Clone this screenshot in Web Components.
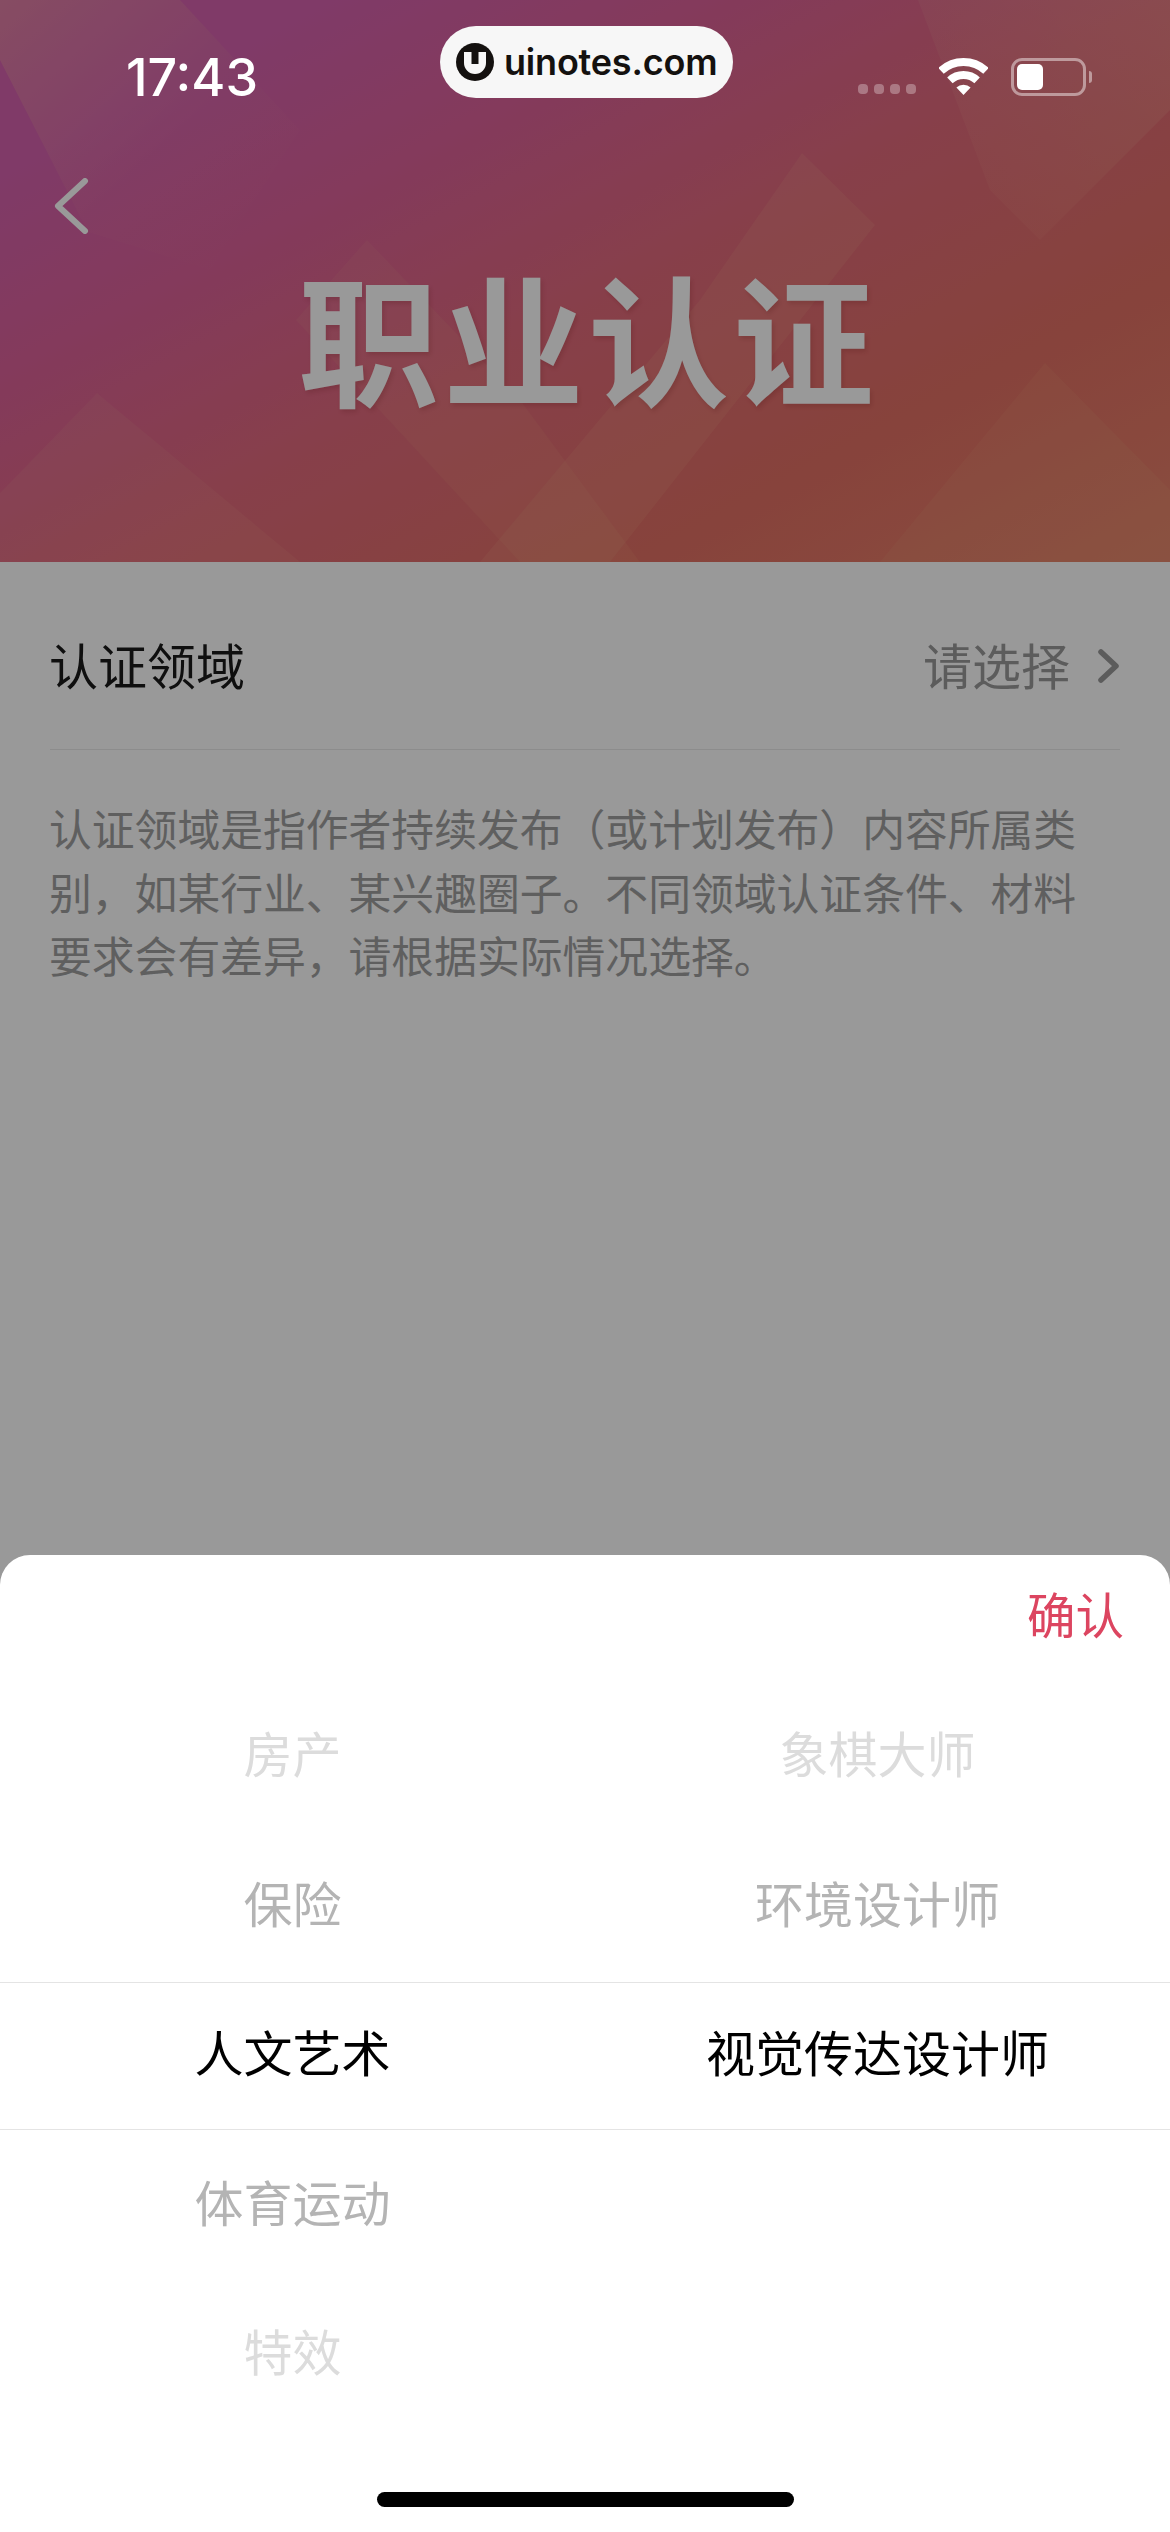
<!DOCTYPE html>
<html lang="zh-CN">
<head>
<meta charset="utf-8">
<title>职业认证</title>
<style>
    html, body { margin: 0; padding: 0; background: #fff; }
    body { font-family: "Noto Sans CJK SC", "Noto Sans", sans-serif; }
</style>
</head>
<body>
<cert-page>
    <cert-header title-text="职业认证"></cert-header>
    <field-row label="认证领域" placeholder="请选择"></field-row>
    <hint-text>认证领域是指作者持续发布（或计划发布）内容所属类别，如某行业、某兴趣圈子。不同领域认证条件、材料要求会有差异，请根据实际情况选择。</hint-text>
    <dim-overlay></dim-overlay>
    <picker-sheet>
        <picker-column items="房产,保险,人文艺术,体育运动,特效"></picker-column>
        <picker-column items="象棋大师,环境设计师,视觉传达设计师"></picker-column>
    </picker-sheet>
    <status-bar></status-bar>
</cert-page>
<script>
class CertPage extends HTMLElement {
    constructor() {
        super();
        this.attachShadow({ mode: 'open' });
        this.shadowRoot.innerHTML = `
            <style>
                :host {
                    display: block;
                    position: relative;
                    width: 1170px;
                    height: 2532px;
                    overflow: hidden;
                    background: #fff;
                }
            </style>
            <slot></slot>
        `;
    }
}

class StatusBar extends HTMLElement {
    constructor() {
        super();
        this.attachShadow({ mode: 'open' });
        this.shadowRoot.innerHTML = `
            <style>
                :host {
                    position: absolute;
                    top: 0;
                    left: 0;
                    right: 0;
                    z-index: 3;
                    display: grid;
                    grid-template-columns: 440px 293px 1fr;
                    color: #fff;
                }
                .time {
                    padding: 48px 0 0 126px;
                    font: 500 52px/60px Inter, "Liberation Sans", sans-serif;
                    letter-spacing: 0;
                }
                .badge {
                    margin-top: 26px;
                    height: 72px;
                    border-radius: 36px;
                    background: #f7f7f7;
                    display: flex;
                    align-items: center;
                    padding-left: 16px;
                    gap: 10px;
                    color: #14110f;
                    font: 600 36px/44px Inter, "Liberation Sans", sans-serif;
                    letter-spacing: -0.2px;
                }
                .badge svg { width: 38px; height: 38px; flex: none; }
                .icons {
                    margin: 58px 0 0 125px;
                    display: flex;
                    align-items: flex-end;
                    height: 38px;
                }
                .dots { display: flex; gap: 6px; margin-right: 23px; margin-bottom: 2px; }
                .dots i { width: 10px; height: 10px; border-radius: 4px; background: rgba(255, 255, 255, .3); }
                .wifi { width: 49px; height: 37px; margin-right: 23px; margin-bottom: 1px; }
                .battery {
                    box-sizing: border-box;
                    width: 75px;
                    height: 38px;
                    border: 3px solid rgba(255, 255, 255, .45);
                    border-radius: 11px;
                    padding: 3px;
                    margin-right: 3px;
                }
                .battery i { display: block; width: 26px; height: 26px; border-radius: 5px; background: #fff; }
                .nub {
                    width: 3px;
                    height: 12px;
                    margin-bottom: 13px;
                    border-radius: 0 3px 3px 0;
                    background: rgba(255, 255, 255, .45);
                }
            </style>
            <div class="time">17:43</div>
            <div class="badge">
                <svg viewBox="0 0 38 38">
                    <circle cx="19" cy="19" r="19" fill="#14110f"/>
                    <path d="M8 9V20a11 11 0 0 0 22 0V9H22.5V21H15.5V9Z" fill="#f7f7f7"/>
                </svg>
                <span>uinotes.com</span>
            </div>
            <div class="icons">
                <div class="dots"><i></i><i></i><i></i><i></i></div>
                <svg class="wifi" viewBox="0 0 49 37" fill="none">
                    <path d="M2 12.9A33 33 0 0 1 47 12.9" stroke="#fff" stroke-width="8"/>
                    <path d="M10.9 22.4A20 20 0 0 1 38.1 22.4" stroke="#fff" stroke-width="8"/>
                    <path d="M24.5 37L17.4 29.6A10 10 0 0 1 31.6 29.6Z" fill="#fff"/>
                </svg>
                <div class="battery"><i></i></div>
                <div class="nub"></div>
            </div>
        `;
    }
}

class CertHeader extends HTMLElement {
    constructor() {
        super();
        this.attachShadow({ mode: 'open' });
        this.shadowRoot.innerHTML = `
            <style>
                :host {
                    display: block;
                    position: relative;
                    box-sizing: border-box;
                    height: 562px;
                    padding-top: 178px;
                    overflow: hidden;
                    background: linear-gradient(152deg, #d561ad 0%, #d561ad 15%, #dc619a 31%, #e26a7c 52%, #e27064 76%, #e6826a 100%);
                }
                .shapes { position: absolute; inset: 0; width: 100%; height: 100%; }
                .back { position: relative; display: block; width: 36px; height: 56px; margin-left: 54px; }
                h1 {
                    position: relative;
                    margin: 26px 0 0;
                    padding-left: 6px;
                    text-align: center;
                    color: #fff;
                    font: 700 141px/150px "Noto Sans CJK SC", sans-serif;
                    letter-spacing: 4px;
                    text-shadow: 2px 3px 4px rgba(120, 30, 30, .18);
                }
            </style>
            <svg class="shapes" viewBox="0 0 1170 562" fill="#ffdca0" fill-opacity=".09">
                <defs>
                    <linearGradient id="tl" x1="0" y1="0" x2="1" y2="1">
                        <stop offset="0" stop-color="#ffd890" stop-opacity=".26"/>
                        <stop offset=".55" stop-color="#ffd890" stop-opacity=".03"/>
                        <stop offset="1" stop-color="#ffd890" stop-opacity="0"/>
                    </linearGradient>
                    <linearGradient id="tr" x1="1" y1="0" x2="0" y2="1">
                        <stop offset="0" stop-color="#ffe0b0" stop-opacity=".16"/>
                        <stop offset="1" stop-color="#ffe0b0" stop-opacity=".02"/>
                    </linearGradient>
                </defs>
                <path d="M0 0H180L300 130L210 270L88 232L0 60Z" fill="url(#tl)" fill-opacity="1"/>
                <path d="M918 0H1170V110L1040 240L990 190Z" fill="url(#tr)" fill-opacity="1"/>
                <path d="M802 153L875 225L610 562H480L700 300Z" fill-opacity=".1"/>
                <path d="M367 240L296 320L520 562H640L520 400Z" fill-opacity=".07"/>
                <path d="M97 393L0 493V562H300Z" fill-opacity=".08"/>
                <path d="M1045 363L1170 490V562H880Z" fill-opacity=".07"/>
            </svg>
            <svg class="back" viewBox="0 0 36 56" fill="none">
                <path d="M31 3L4 28L31 53" stroke="#fff" stroke-width="6" stroke-linecap="round" stroke-linejoin="round"/>
            </svg>
            <h1></h1>
        `;
        this.shadowRoot.querySelector('h1').textContent = this.getAttribute('title-text');
    }
}

class FieldRow extends HTMLElement {
    constructor() {
        super();
        this.attachShadow({ mode: 'open' });
        this.shadowRoot.innerHTML = `
            <style>
                :host {
                    display: flex;
                    align-items: center;
                    box-sizing: border-box;
                    height: 188px;
                    margin: 0 50px;
                    padding-top: 16px;
                    border-bottom: 1px solid #e9e9e9;
                    font-size: 49px;
                    line-height: 64px;
                }
                .label { flex: 1; color: #191919; margin-left: -1px; }
                .value { color: #999; }
                svg { width: 24px; height: 36px; margin: 5px -1px 0 27px; }
            </style>
            <span class="label"></span>
            <span class="value"></span>
            <svg viewBox="0 0 24 36" fill="none">
                <path d="M4 4L19 18L4 32" stroke="#999" stroke-width="5.5" stroke-linecap="round" stroke-linejoin="round"/>
            </svg>
        `;
        this.shadowRoot.querySelector('.label').textContent = this.getAttribute('label');
        this.shadowRoot.querySelector('.value').textContent = this.getAttribute('placeholder');
    }
}

class HintText extends HTMLElement {
    constructor() {
        super();
        this.attachShadow({ mode: 'open' });
        this.shadowRoot.innerHTML = `
            <style>
                :host {
                    display: block;
                    margin: 46px 70px 0 49px;
                    font-size: 42.8px;
                    line-height: 63.5px;
                    color: #9e9e9e;
                }
            </style>
            <slot></slot>
        `;
    }
}

class DimOverlay extends HTMLElement {
    constructor() {
        super();
        this.attachShadow({ mode: 'open' });
        this.shadowRoot.innerHTML = `
            <style>
                :host {
                    position: absolute;
                    inset: 0;
                    z-index: 1;
                    background: rgba(0, 0, 0, .4);
                }
            </style>
        `;
    }
}

class PickerSheet extends HTMLElement {
    constructor() {
        super();
        this.attachShadow({ mode: 'open' });
        this.shadowRoot.innerHTML = `
            <style>
                :host {
                    position: absolute;
                    left: 0;
                    right: 0;
                    bottom: 0;
                    height: 977px;
                    z-index: 2;
                    background: #fff;
                    border-radius: 30px 30px 0 0;
                }
                .top {
                    display: flex;
                    justify-content: flex-end;
                    box-sizing: border-box;
                    height: 122px;
                    padding: 26px 46px 0 0;
                    color: #dc4560;
                    font-size: 48.5px;
                    line-height: 64px;
                }
                .wheel { position: relative; display: grid; grid-template-columns: 1fr 1fr; }
                .band {
                    position: absolute;
                    left: 0;
                    right: 0;
                    top: 305px;
                    height: 146px;
                    border-top: 1px solid #e4e4e4;
                    border-bottom: 1px solid #e4e4e4;
                }
                .home {
                    position: absolute;
                    left: 377px;
                    bottom: 25px;
                    width: 417px;
                    height: 15px;
                    border-radius: 8px;
                    background: #000;
                }
            </style>
            <div class="top">确认</div>
            <div class="wheel">
                <div class="band"></div>
                <slot></slot>
            </div>
            <div class="home"></div>
        `;
    }
}

class PickerColumn extends HTMLElement {
    constructor() {
        super();
        this.attachShadow({ mode: 'open' });
        // the selected row is always the third one, the others fade with the distance to it
        const colors = ['#dcdcdc', '#b4b4b4', '#000', '#b4b4b4', '#dcdcdc'];
        const items = this.getAttribute('items').split(',');
        this.shadowRoot.innerHTML = `
            <style>
                :host { display: block; position: relative; }
                div {
                    height: 149.5px;
                    line-height: 149.5px;
                    text-align: center;
                    font-size: 49px;
                }
            </style>
            ${items.map((text, i) => `<div style="color: ${colors[i]}">${text}</div>`).join('')}
        `;
    }
}

customElements.define('cert-page', CertPage);
customElements.define('status-bar', StatusBar);
customElements.define('cert-header', CertHeader);
customElements.define('field-row', FieldRow);
customElements.define('hint-text', HintText);
customElements.define('dim-overlay', DimOverlay);
customElements.define('picker-sheet', PickerSheet);
customElements.define('picker-column', PickerColumn);
</script>
</body>
</html>
